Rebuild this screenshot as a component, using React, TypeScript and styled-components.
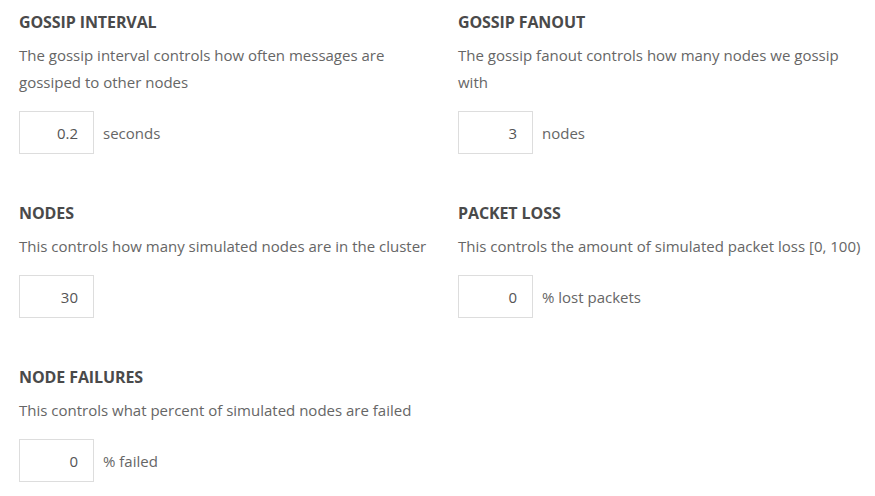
import React from "react";
import styled, { createGlobalStyle } from "styled-components";

const GlobalStyle = createGlobalStyle`
  html, body {
    margin: 0;
    padding: 0;
    background: #ffffff;
  }
  body {
    font-family: "Open Sans", "Liberation Sans", sans-serif;
    color: #666666;
  }
`;

const Page = styled.div`
  display: grid;
  grid-template-columns: 420px 408px;
  column-gap: 19px;
  row-gap: 47px;
  padding: 10px 0 0 19px;
  align-items: start;
`;

const Section = styled.section`
  display: flex;
  flex-direction: column;
`;

const Heading = styled.h3`
  margin: 2px 0 10px;
  font-family: "Open Sans", "Liberation Sans", sans-serif;
  font-weight: 700;
  font-size: 16px;
  line-height: 20px;
  letter-spacing: -0.1px;
  color: #4a4a4a;
  text-transform: uppercase;
`;

const Description = styled.p`
  margin: 0 0 15px;
  font-size: 15px;
  line-height: 27px;
  color: #666666;
`;

const Row = styled.div`
  display: flex;
  align-items: center;
  gap: 9px;
`;

const NumberInput = styled.input`
  box-sizing: border-box;
  width: 75px;
  height: 43px;
  padding: 0 15px 0 8px;
  border: 1px solid #dddddd;
  border-radius: 0;
  background: #ffffff;
  font-family: "Open Sans", "Liberation Sans", sans-serif;
  font-size: 15px;
  color: #555555;
  text-align: right;
  outline: none;
`;

const Unit = styled.span`
  font-size: 15px;
  color: #666666;
`;

type Setting = {
  title: string;
  description: string;
  value: string;
  unit?: string;
};

const settings: Setting[] = [
  {
    title: "Gossip Interval",
    description: "The gossip interval controls how often messages are gossiped to other nodes",
    value: "0.2",
    unit: "seconds",
  },
  {
    title: "Gossip Fanout",
    description: "The gossip fanout controls how many nodes we gossip with",
    value: "3",
    unit: "nodes",
  },
  {
    title: "Nodes",
    description: "This controls how many simulated nodes are in the cluster",
    value: "30",
  },
  {
    title: "Packet Loss",
    description: "This controls the amount of simulated packet loss [0, 100)",
    value: "0",
    unit: "% lost packets",
  },
  {
    title: "Node Failures",
    description: "This controls what percent of simulated nodes are failed",
    value: "0",
    unit: "% failed",
  },
];

export default function App() {
  return (
    <>
      <GlobalStyle />
      <Page>
        {settings.map((s) => (
          <Section key={s.title}>
            <Heading>{s.title}</Heading>
            <Description>{s.description}</Description>
            <Row>
              <NumberInput type="text" defaultValue={s.value} />
              {s.unit && <Unit>{s.unit}</Unit>}
            </Row>
          </Section>
        ))}
      </Page>
    </>
  );
}
